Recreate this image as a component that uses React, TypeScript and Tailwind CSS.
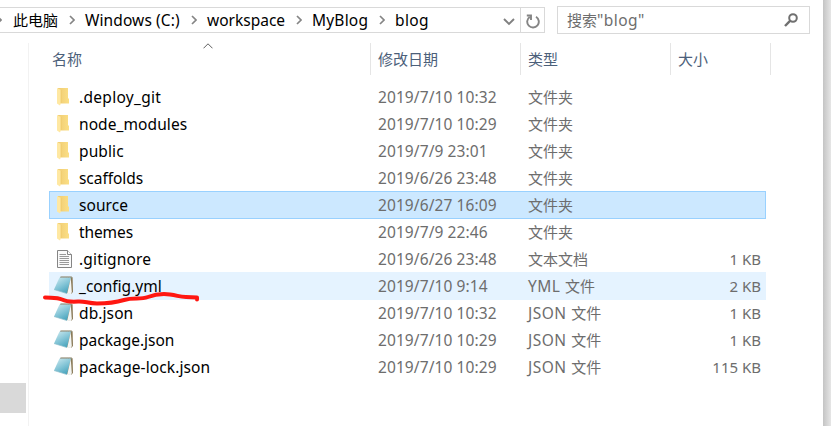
import React from 'react';

type Kind = 'folder' | 'text' | 'note';
type Entry = { name: string; date: string; ext?: string; type: string; size?: string; kind: Kind; track: string; state?: 'selected' | 'hover' };

const entries: Entry[] = [
  { name: '.deploy_git', date: '2019/7/10 10:32', type: '文件夹', kind: 'folder', track: 'tracking-[0.3px]' },
  { name: 'node_modules', date: '2019/7/10 10:29', type: '文件夹', kind: 'folder', track: 'tracking-[0.08px]' },
  { name: 'public', date: '2019/7/9 23:01', type: '文件夹', kind: 'folder', track: 'tracking-[0.1px]' },
  { name: 'scaffolds', date: '2019/6/26 23:48', type: '文件夹', kind: 'folder', track: 'tracking-[-0.05px]' },
  { name: 'source', date: '2019/6/27 16:09', type: '文件夹', kind: 'folder', track: 'tracking-[0.05px]', state: 'selected' },
  { name: 'themes', date: '2019/7/9 22:46', type: '文件夹', kind: 'folder', track: 'tracking-[-0.1px]' },
  { name: '.gitignore', date: '2019/6/26 23:48', type: '文本文档', size: '1 KB', kind: 'text', track: 'tracking-[0.15px]' },
  { name: '_config.yml', date: '2019/7/10 9:14', ext: 'YML', type: '文件', size: '2 KB', kind: 'note', track: 'tracking-[0px]', state: 'hover' },
  { name: 'db.json', date: '2019/7/10 10:32', ext: 'JSON', type: '文件', size: '1 KB', kind: 'note', track: 'tracking-[0.1px]' },
  { name: 'package.json', date: '2019/7/10 10:29', ext: 'JSON', type: '文件', size: '1 KB', kind: 'note', track: 'tracking-[0px]' },
  { name: 'package-lock.json', date: '2019/7/10 10:29', ext: 'JSON', type: '文件', size: '115 KB', kind: 'note', track: 'tracking-[0.1px]' },
];

function FolderIcon() {
  return (
    <svg className="ml-[8px] block h-[18px] w-[13px]" viewBox="0 0 13 18">
      <defs>
        <linearGradient id="folderBack" x1="0" x2="1">
          <stop offset="0" stopColor="#f0cc73" />
          <stop offset="1" stopColor="#fbdf85" />
        </linearGradient>
      </defs>
      <path d="M1 0H11V10L12 11V15.500H1Z" fill="url(#folderBack)" />
      <path d="M0 0L4 2V15L3 17.500L0 15.500Z" fill="#ffe8a2" />
      <path d="M4 2V15" stroke="#edc765" strokeWidth=".7" />
    </svg>
  );
}

function TextIcon() {
  return (
    <svg className="ml-[8px] block h-[18px] w-[15px]" viewBox="0 0 15 18">
      <path d="M.5 .5H10.5L14.500 4.500V17.500H.5Z" fill="#fafafa" stroke="#858585" />
      <path d="M10.500 .5V4.500H14.500" fill="#fff" stroke="#858585" />
      <path d="M2.500 4.500H9M2.500 6.500H12M2.500 8.500H12M2.500 10.500H12M2.500 12.500H12M2.500 14.500H12" stroke="#999" />
    </svg>
  );
}

function NoteIcon() {
  return (
    <svg className="ml-[5px] block h-[19px] w-[20px]" viewBox="0 0 20 19">
      <defs>
        <linearGradient id="noteCover" x1="0.2" y1="0" x2=".8" y2="1">
          <stop offset="0" stopColor="#c6e6ed" />
          <stop offset=".5" stopColor="#82c4d6" />
          <stop offset="1" stopColor="#409fb9" />
        </linearGradient>
      </defs>
      <path d="M6 1.500L7 .4H17.500L18.600 1.500L19 16L17 18L13 17Z" fill="#8a7a58" />
      <path d="M5.500 1.400L17 1.600L13 17.500L0 13.500Z" fill="url(#noteCover)" />
      <path d="M16.800 2L13.200 17.700L17 17.900L17.800 16Z" fill="#f4f6f4" />
      <path d="M6 1.200L17.500 1.300" stroke="#9eb0b3" strokeWidth="1" strokeDasharray="1 .8" />
      <path d="M0 13.500L13 17.600" stroke="#8dbdca" strokeWidth=".7" />
    </svg>
  );
}

function Chevron({ className = '' }: { className?: string }) {
  return (
    <svg className={`h-[10px] w-[6px] shrink-0 ${className}`} viewBox="0 0 6 10">
      <path d="M1 1L5 5L1 9" fill="none" stroke="#858585" strokeWidth="1.700" />
    </svg>
  );
}

function Row({ entry }: { entry: Entry }) {
  const state = entry.state === 'selected' ? 'bg-[#cce8ff] outline outline-1 -outline-offset-1 outline-[#99d1ff]' : entry.state === 'hover' ? 'bg-[#e5f3ff]' : '';
  return (
    <div className={`-mb-px grid h-[28px] w-[717px] grid-cols-[30px_299px_150px_143px_90px] items-center text-[#6d6d6d] ${state}`}>
      <span className="-mt-px">{entry.kind === 'folder' ? <FolderIcon /> : entry.kind === 'text' ? <TextIcon /> : <NoteIcon />}</span>
      <span className={`text-[15.5px] text-black ${entry.track}`}>{entry.name}</span>
      <span className="text-[15.5px] tracking-[0.09px]">{entry.date}</span>
      <span>{entry.ext && <span className="text-[15.5px] tracking-[0.5px]">{entry.ext} </span>}{entry.type}</span>
      <span className="text-right">{entry.size}</span>
    </div>
  );
}

export default function App() {
  return (
    <div className="relative flex h-[426px] w-[831px] overflow-hidden whitespace-nowrap bg-white font-['Noto_Sans','Noto_Sans_CJK_SC',sans-serif] text-[15px] leading-[20px]">
      <main className="flex w-[823px] shrink-0 flex-col">
        <div className="flex h-[43px] shrink-0 items-start pt-[6px]">
          <div className="mt-px flex h-[26px] w-[545px] items-center border-y border-r border-[#d9d9d9] text-[15.5px] text-black">
            <Chevron className="-ml-[4px]" />
            <span className="ml-[11px] w-[56px] shrink-0 text-[15px]">此电脑</span>
            <Chevron />
            <span className="ml-[10px] w-[107px] shrink-0 tracking-[0.1px]">Windows (C:)</span>
            <Chevron className="-ml-px" />
            <span className="ml-[10px] w-[89px] shrink-0">workspace</span>
            <Chevron />
            <span className="ml-[10px] w-[67px] shrink-0 tracking-[0.2px]">MyBlog</span>
            <Chevron />
            <span className="ml-[10px] w-[108px] shrink-0 tracking-[0.4px]">blog</span>
            <svg className="mt-[4px] h-[8px] w-[12px] shrink-0" viewBox="0 0 12 8"><path d="M1 1L6 6L11 1" fill="none" stroke="#808080" strokeWidth="1.900" /></svg>
            <div className="ml-auto flex h-full w-[24px] shrink-0 items-center justify-center border-l border-[#d9d9d9]">
              <svg className="mt-[2px] h-[15px] w-[14px]" viewBox="0 0 14 15" fill="none" stroke="#858585" strokeWidth="1.900"><path d="M10 2.800A5.800 5.800 0 1 1 3.700 3M.8 1.500H5V6" /></svg>
            </div>
          </div>
          <div className="ml-[12px] flex h-[28px] w-[253px] items-center justify-between border border-[#d9d9d9] pl-[9px] pr-[11px] text-[#6d6d6d]">
            <span>搜索<span className="text-[15.5px] tracking-[0.45px]">"blog"</span></span>
            <svg className="h-[14px] w-[14px]" viewBox="0 0 14 14" fill="none" stroke="#707070"><circle cx="9" cy="5" r="3.800" strokeWidth="2" /><path d="M6.300 7.700L1 13" strokeWidth="2.400" /></svg>
          </div>
        </div>
        <div className="flex flex-1">
          <aside className="w-[29px] shrink-0 border-r border-[#f2f2f2] pt-[340px]"><div className="h-[30px] w-[26px] bg-[#d9d9d9]" /></aside>
          <section className="flex flex-1 flex-col">
            <div className="flex h-[32px] text-[#4c607a]">
              <div className="relative w-[342px] border-r border-[#e5e5e5] pl-[23px] pt-[6px]">
                名称
                <svg className="absolute left-[174px] top-0 h-[6px] w-[10px]" viewBox="0 0 10 6"><path d="M.5 5.300L5 .8L9.500 5.300" fill="none" stroke="#606060" /></svg>
              </div>
              <div className="w-[150px] border-r border-[#e5e5e5] pl-[7px] pt-[6px]">修改日期</div>
              <div className="w-[150px] border-r border-[#e5e5e5] pl-[7px] pt-[6px]">类型</div>
              <div className="w-[100px] border-r border-[#e5e5e5] pl-[7px] pt-[6px]">大小</div>
            </div>
            <div className="ml-[20px] mt-[8px] flex flex-col">{entries.map((entry) => <Row key={entry.name} entry={entry} />)}</div>
          </section>
        </div>
      </main>
      <div className="flex-1 bg-linear-to-r from-[#c4c4c4] to-[#e6e6e6]" />
      <svg className="absolute left-[42px] top-[290px] h-[16px] w-[158px]" viewBox="0 0 158 16">
        <path d="M3 7.500C10 8 15 7 20 9.500S29 12 36 11.500S46 13.500 55 13.500S72 13 82 10S98 10 106 7S120 3.500 128 4.500S137 7 144 7L155 7.500L155 9.500" fill="none" stroke="#ff1711" strokeWidth="4" strokeLinecap="round" strokeLinejoin="round" />
      </svg>
    </div>
  );
}
